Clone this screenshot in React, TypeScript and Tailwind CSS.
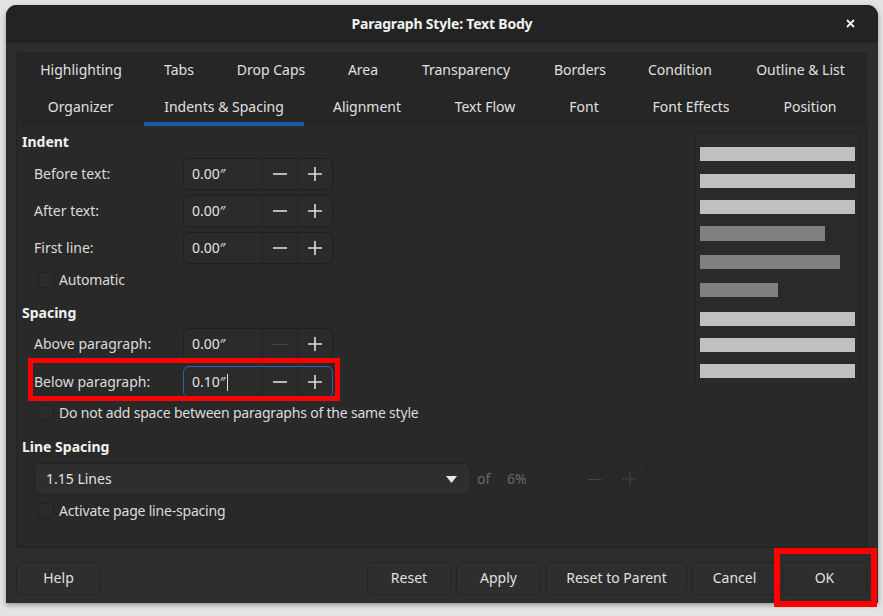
import { ReactNode } from "react";

const row1 = [
  { label: "Highlighting", w: "w-[128px]" },
  { label: "Tabs", w: "w-[68px]" },
  { label: "Drop Caps", w: "w-[116px]" },
  { label: "Area", w: "w-[68px]" },
  { label: "Transparency", w: "w-[138px]" },
  { label: "Borders", w: "w-[90px]" },
  { label: "Condition", w: "w-[110px]" },
  { label: "Outline & List", w: "flex-1" },
];

const row2 = [
  { label: "Organizer", w: "w-[127px]" },
  { label: "Indents & Spacing", w: "w-[160px]", active: true },
  { label: "Alignment", w: "w-[126px]" },
  { label: "Text Flow", w: "w-[110px]" },
  { label: "Font", w: "w-[88px]" },
  { label: "Font Effects", w: "w-[126px]" },
  { label: "Position", w: "flex-1" },
];

const bars = [
  "mt-[14px] w-[155px] bg-[#c0c0c0]",
  "mt-[13px] w-[155px] bg-[#c0c0c0]",
  "mt-[12px] w-[155px] bg-[#c0c0c0]",
  "mt-[12px] w-[125px] bg-[#808080] h-[15px]",
  "mt-[14px] w-[140px] bg-[#808080]",
  "mt-[14px] w-[78px] bg-[#808080]",
  "mt-[15px] w-[155px] bg-[#c0c0c0]",
  "mt-[12px] w-[155px] bg-[#c0c0c0]",
  "mt-[12px] w-[155px] bg-[#c0c0c0]",
];

function Minus({ dim }: { dim?: boolean }) {
  if (dim) {
    return <div className="h-px w-[14px] border-t border-dotted border-[#5a5a5a]" />;
  }
  return (
    <svg width="14" height="14" viewBox="0 0 14 14">
      <path d="M0 7h14" stroke="#dedede" strokeWidth="1.6" />
    </svg>
  );
}

function Plus({ dim }: { dim?: boolean }) {
  return (
    <svg width="14" height="14" viewBox="0 0 14 14">
      <path
        d="M0 7h14M7 0v14"
        stroke={dim ? "#5a5a5a" : "#dedede"}
        strokeWidth={dim ? 1 : 1.6}
        strokeDasharray={dim ? "1 1" : undefined}
      />
    </svg>
  );
}

function Spin({
  value,
  focused,
  minusDim,
}: {
  value: string;
  focused?: boolean;
  minusDim?: boolean;
}) {
  return (
    <div
      className={
        "flex h-[32px] w-[150px] rounded-[6px] border bg-[#2b2b2b] " +
        (focused ? "border-[#2f62a8]" : "border-[#1f1f1f]")
      }
    >
      <div className="flex flex-1 items-center pl-[8px] text-[#e2e2e2]">
        {value}
        {focused && <span className="ml-px h-[17px] w-px bg-[#e2e2e2]" />}
      </div>
      <div className="flex w-[35px] items-center justify-center border-l border-[#222]">
        <Minus dim={minusDim} />
      </div>
      <div className="flex w-[35px] items-center justify-center border-l border-[#222]">
        <Plus />
      </div>
    </div>
  );
}

function Field({ label, children }: { label: string; children: ReactNode }) {
  return (
    <div className="flex items-center pl-[12px]">
      <span className="w-[149px] text-[#dcdcdc]">{label}</span>
      {children}
    </div>
  );
}

function Check({ label, className }: { label: string; className: string }) {
  return (
    <div className={"flex h-[20px] items-center pl-[16px] " + className}>
      <span className="h-[16px] w-[16px] rounded-[3px] border border-[#222] bg-[#2b2b2b]" />
      <span className="ml-[5px] tracking-[-0.2px] text-[#dcdcdc]">{label}</span>
    </div>
  );
}

function Button({ label, w }: { label: string; w: string }) {
  return (
    <div
      className={
        "flex h-[33px] items-center justify-center rounded-[6px] border border-[#232323] bg-[#2e2e2e] pb-px text-[#e0e0e0] " +
        w
      }
    >
      {label}
    </div>
  );
}

export default function App() {
  return (
    <div className="relative h-[616px] w-[883px] overflow-hidden bg-[#e3e3e3] pl-[6px] pt-[5px] font-['Noto_Sans',sans-serif] text-[14px] leading-[20px]">
      <div className="flex h-[598px] w-[872px] flex-col rounded-t-[11px] bg-[#2d2d2d] shadow-[0_2px_5px_rgba(0,0,0,0.35)]">
        {/* title bar */}
        <div className="relative flex h-[38px] items-center justify-center rounded-t-[11px] bg-[#232323]">
          <span className="font-bold tracking-[-0.2px] text-[#f0f0f0]">Paragraph Style: Text Body</span>
          <svg className="absolute right-[23px] top-[14px]" width="9" height="9" viewBox="0 0 9 9">
            <path d="M1 1l7 7M8 1l-7 7" stroke="#f0f0f0" strokeWidth="1.8" />
          </svg>
        </div>

        {/* notebook */}
        <div className="ml-[10px] mr-[11px] mt-[10px] flex h-[495px] flex-col border border-[#222] bg-[#292929]">
          <div className="bg-[#262626]">
            <div className="flex h-[35px] items-center pb-[3px]">
              {row1.map((t) => (
                <div key={t.label} className={"text-center text-[#e0e0e0] " + t.w}>
                  {t.label}
                </div>
              ))}
            </div>
            <div className="flex h-[37px]">
              {row2.map((t) => (
                <div
                  key={t.label}
                  className={
                    "flex items-center justify-center border-b-[4px] pt-[3px] text-[#e0e0e0] " +
                    (t.active ? "border-[#1c5aa8] " : "border-transparent ") +
                    t.w
                  }
                >
                  {t.label}
                </div>
              ))}
            </div>
          </div>

          <div className="flex flex-1">
            <div className="flex-1 pl-[5px] pt-[6px]">
              <div className="font-bold text-[#f2f2f2]">Indent</div>
              <div className="mt-[6px]">
                <Field label="Before text:">
                  <Spin value="0.00″" />
                </Field>
              </div>
              <div className="mt-[5px]">
                <Field label="After text:">
                  <Spin value="0.00″" />
                </Field>
              </div>
              <div className="mt-[5px]">
                <Field label="First line:">
                  <Spin value="0.00″" />
                </Field>
              </div>
              <Check label="Automatic" className="mt-[6px]" />

              <div className="mt-[13px] font-bold text-[#f2f2f2]">Spacing</div>
              <div className="mt-[5px]">
                <Field label="Above paragraph:">
                  <Spin value="0.00″" minusDim />
                </Field>
              </div>
              <div className="mt-[6px]">
                <Field label="Below paragraph:">
                  <Spin value="0.10″" focused />
                </Field>
              </div>
              <Check label="Do not add space between paragraphs of the same style" className="mt-[5px]" />

              <div className="mt-[14px] font-bold text-[#f2f2f2]">Line Spacing</div>
              <div className="mt-[6px] flex items-center pl-[12px]">
                <div className="flex h-[32px] w-[437px] items-center justify-between rounded-[6px] border border-[#222] bg-[#2e2e2e] pl-[11px] pr-[13px] text-[#e2e2e2]">
                  <span>1.15 Lines</span>
                  <svg width="11" height="7" viewBox="0 0 11 7">
                    <path d="M0 0h11L5.5 7z" fill="#e8e8e8" />
                  </svg>
                </div>
                <span className="ml-[6px] w-[21px] text-[#6a6a6a]">of</span>
                <div className="flex h-[32px] w-[150px] rounded-[6px] border border-[#262626] text-[#6a6a6a]">
                  <div className="flex flex-1 items-center pl-[8px]">6%</div>
                  <div className="flex w-[35px] items-center justify-center">
                    <Minus dim />
                  </div>
                  <div className="flex w-[35px] items-center justify-center">
                    <Plus dim />
                  </div>
                </div>
              </div>
              <Check label="Activate page line-spacing" className="mt-[6px]" />
            </div>

            <div className="mr-[5px] mt-[6px] h-[254px] w-[166px] border border-[#232323] bg-[#2a2a2a] pl-[4px]">
              {bars.map((b, i) => (
                <div key={i} className={"h-[14px] " + b} />
              ))}
            </div>
          </div>
        </div>

        {/* buttons */}
        <div className="ml-[10px] mr-[11px] mt-[14px] flex items-center">
          <Button label="Help" w="w-[85px]" />
          <div className="ml-auto flex gap-[5px]">
            <Button label="Reset" w="w-[84px]" />
            <Button label="Apply" w="w-[85px]" />
            <Button label="Reset to Parent" w="w-[141px]" />
            <Button label="Cancel" w="w-[85px]" />
            <Button label="OK" w="w-[85px]" />
          </div>
        </div>
      </div>

      {/* annotations */}
      <div className="absolute left-[28px] top-[358px] h-[43px] w-[312px] border-[5px] border-[#ff0000]" />
      <div className="absolute left-[774px] top-[548px] h-[59px] w-[103px] border-[6px] border-[#ff0000]" />
    </div>
  );
}
